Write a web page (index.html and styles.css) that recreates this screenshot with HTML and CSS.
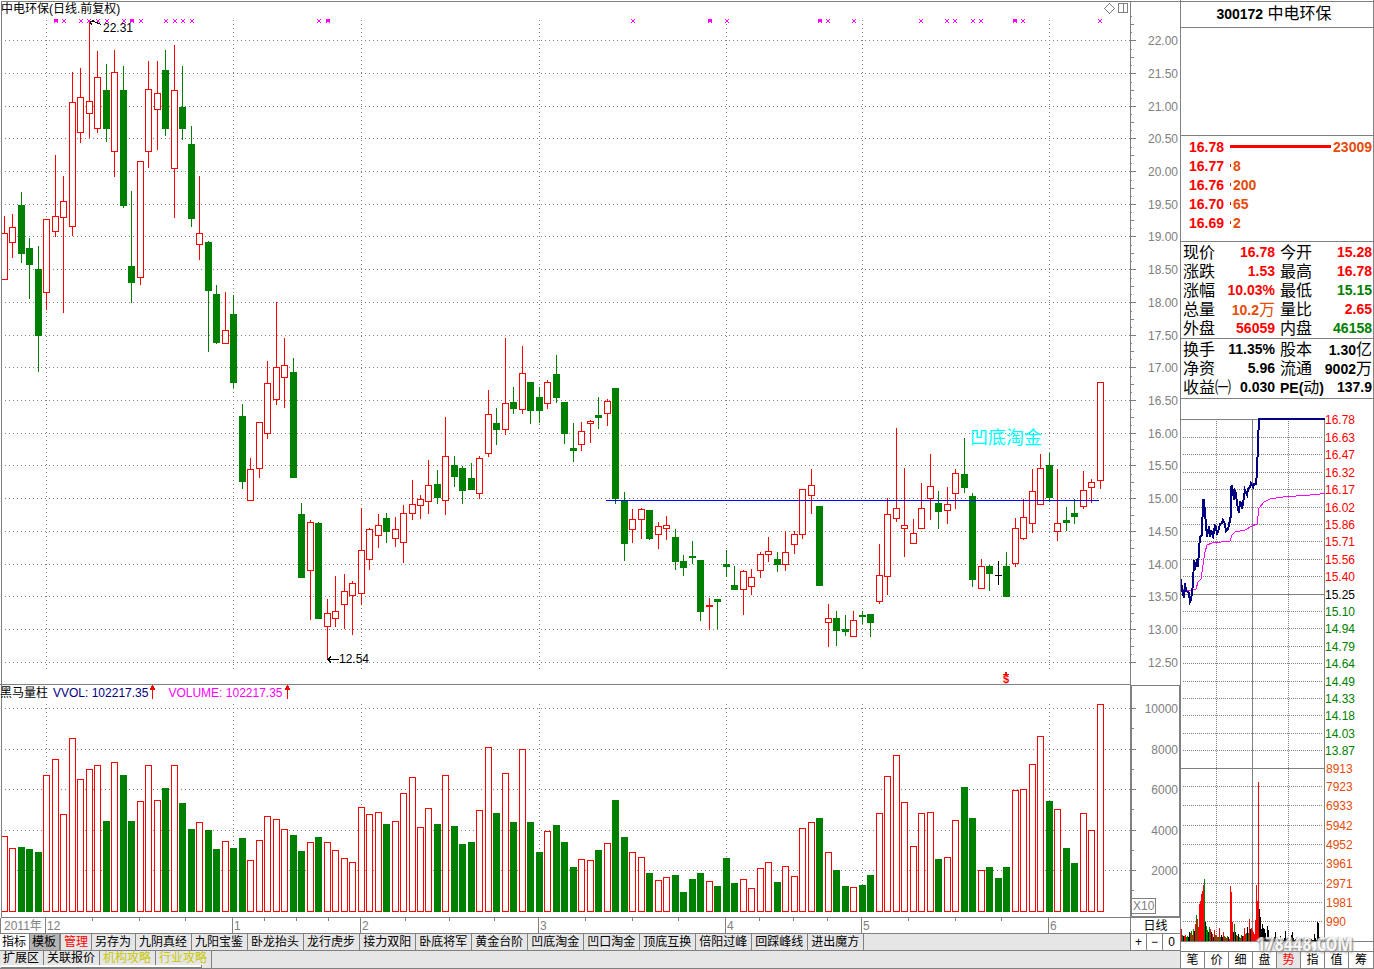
FILE: index.html
```html
<!DOCTYPE html>
<html lang="zh-CN">
<head>
<meta charset="utf-8">
<meta name="viewport" content="width=device-width, initial-scale=1">
<title>300172 中电环保</title>
<link rel="stylesheet" href="styles.css">
</head>
<body>
<div class="app">
  <main class="main">
    <figure class="chart">
      <figcaption class="chart__title">中电环保(日线.前复权)</figcaption>
      <svg id="price" class="plot" viewBox="0 0 1180 684" role="img" aria-label="日线"></svg>
    </figure>
    <figure class="chart">
      <figcaption class="chart__title chart__title--volume">
        <span>黑马量柱</span>
        <span class="vvol">VVOL: 102217.35<svg class="up" viewBox="0 0 7 14"><path d="M3 0h1v14h-1zM2 1h3v2h1v2h-5v-2h1z"/></svg></span>
        <span class="volume">VOLUME: 102217.35<svg class="up" viewBox="0 0 7 14"><path d="M3 0h1v14h-1zM2 1h3v2h1v2h-5v-2h1z"/></svg></span>
      </figcaption>
      <svg id="volume" class="plot" viewBox="0 684 1180 234" role="img" aria-label="成交量"></svg>
    </figure>
    <div class="timeline">
      <svg id="timeline" class="plot" viewBox="0 918 1130 15" role="img" aria-label="时间轴"></svg>
      <button class="timeline__period" type="button">日线</button>
    </div>
    <div class="bar">
      <nav class="tabs">
        <button class="tab tab--short tab--active" type="button">指标</button>
        <button class="tab tab--short tab--pressed" type="button">模板</button>
        <button class="tab tab--manage" type="button">管理</button>
        <button class="tab" type="button">另存为</button>
        <button class="tab" type="button">九阴真经</button>
        <button class="tab" type="button">九阳宝鉴</button>
        <button class="tab" type="button">卧龙抬头</button>
        <button class="tab" type="button">龙行虎步</button>
        <button class="tab" type="button">接力双阳</button>
        <button class="tab" type="button">卧底将军</button>
        <button class="tab" type="button">黄金台阶</button>
        <button class="tab" type="button">凹底淘金</button>
        <button class="tab" type="button">凹口淘金</button>
        <button class="tab" type="button">顶底互换</button>
        <button class="tab" type="button">倍阳过峰</button>
        <button class="tab" type="button">回踩峰线</button>
        <button class="tab" type="button">进出魔方</button>
      </nav>
      <div class="zoomer">
        <button class="zoomer__btn" type="button">+</button>
        <button class="zoomer__btn" type="button">−</button>
        <button class="zoomer__btn" type="button">0</button>
      </div>
    </div>
    <div class="bar bar--extra">
      <nav class="tabs">
        <button class="tab" type="button">扩展区</button>
        <button class="tab" type="button">关联报价</button>
        <button class="tab tab--gold" type="button">机构攻略</button>
        <button class="tab tab--gold" type="button">行业攻略</button>
      </nav>
    </div>
  </main>

  <aside class="side">
    <h1 class="side__title"><b>300172</b> 中电环保</h1>
    <div class="side__blank"></div>
    <ul class="queue">
      <li class="queue__row"><b>16.78</b><i class="queue__bar queue__bar--full"></i><b class="orange">23009</b></li>
      <li class="queue__row"><b>16.77</b><i class="queue__bar"></i><b class="orange">8</b></li>
      <li class="queue__row"><b>16.76</b><i class="queue__bar"></i><b class="orange">200</b></li>
      <li class="queue__row"><b>16.70</b><i class="queue__bar"></i><b class="orange">65</b></li>
      <li class="queue__row"><b>16.69</b><i class="queue__bar"></i><b class="orange">2</b></li>
    </ul>
    <dl class="stats">
      <dt>现价</dt><dd class="red">16.78</dd><dt>今开</dt><dd class="red">15.28</dd>
      <dt>涨跌</dt><dd class="red">1.53</dd><dt>最高</dt><dd class="red">16.78</dd>
      <dt>涨幅</dt><dd class="red">10.03%</dd><dt>最低</dt><dd class="green">15.15</dd>
      <dt>总量</dt><dd class="orange">10.2<span class="unit">万</span></dd><dt>量比</dt><dd class="red">2.65</dd>
      <dt>外盘</dt><dd class="red">56059</dd><dt>内盘</dt><dd class="green">46158</dd>
    </dl>
    <dl class="stats stats--base">
      <dt>换手</dt><dd>11.35%</dd><dt>股本</dt><dd>1.30<span class="unit">亿</span></dd>
      <dt>净资</dt><dd>5.96</dd><dt>流通</dt><dd>9002<span class="unit">万</span></dd>
      <dt>收益㈠</dt><dd>0.030</dd><dt><b>PE(</b>动<b>)</b></dt><dd>137.9</dd>
    </dl>
    <svg id="intraday" class="plot" viewBox="1181 399 192 552" role="img" aria-label="分时走势"></svg>
    <nav class="modes">
      <button class="mode" type="button">笔</button>
      <button class="mode" type="button">价</button>
      <button class="mode" type="button">细</button>
      <button class="mode" type="button">盘</button>
      <button class="mode mode--active" type="button">势</button>
      <button class="mode" type="button">指</button>
      <button class="mode" type="button">值</button>
      <button class="mode" type="button">筹</button>
    </nav>
    <span class="watermark">178448.COM</span>
  </aside>
</div>
<script src="chart.js"></script>
</body>
</html>
```

FILE: styles.css
```css
* {
  box-sizing: border-box;
}

body {
  margin: 0;
  background: #fff;
  color: #000;
  font: 12px/16px "Liberation Sans", "Noto Sans CJK SC", sans-serif;
}

button {
  margin: 0;
  padding: 0;
  border: 0;
  background: none;
  color: inherit;
  font: inherit;
  white-space: nowrap;
}

.app {
  display: grid;
  grid-template-columns: minmax(0, 1fr) 194px;
}

.main {
  display: flex;
  flex-direction: column;
  min-width: 0;
}

.plot {
  display: block;
  width: 100%;
  height: auto;
  shape-rendering: crispEdges;
}

.plot text {
  font-family: "Liberation Sans", "Noto Sans CJK SC", sans-serif;
  font-size: 12px;
}

/* charts */
.chart {
  position: relative;
  margin: 0;
}

.chart__title {
  position: absolute;
  top: 1px;
  left: 1px;
}

.chart__title--volume {
  display: flex;
  gap: 5px;
  left: 0;
}

.vvol {
  margin-right: 7px;
  color: #000080;
}

.volume {
  color: #f0f;
}

.up {
  width: 7px;
  height: 14px;
  margin-left: 1px;
  fill: #f00;
  vertical-align: top;
  shape-rendering: crispEdges;
}

.axis { fill: #808080; }
.grid { fill: none; stroke: #808080; stroke-dasharray: 1 3; }
.grid--fine { stroke-dasharray: 1 1; }
.rise { fill: #fff; stroke: #f00; }
.rise-fill { fill: #f00; }
.fall { fill: #008000; }
.flat { fill: #000; }
.level { fill: #00f; }
.mark { fill: #f0f; }
.tool { fill: none; stroke: #808080; }
.arrow { fill: none; stroke: #000; }
.axis-box { fill: #fff; stroke: #808080; }
.amount { fill: #e64b0a; }
.trend { fill: none; stroke: #000080; stroke-width: 2; }
.average { fill: none; stroke: #f0f; }

.plot .signal {
  fill: #0ff;
  font-size: 18px;
}

.plot .sell {
  fill: #f00;
  font-size: 11px;
  font-weight: bold;
}

/* time axis */
.timeline {
  display: grid;
  grid-template-columns: minmax(0, 1fr) 50px;
  border-bottom: 1px solid #808080;
}

.timeline__period {
  border-left: 1px solid #808080;
  line-height: 14px;
}

/* indicator tabs */
.bar {
  display: flex;
  justify-content: space-between;
  height: 17px;
  border-bottom: 1px solid #808080;
  background: #e6e6e6;
}

.bar--extra {
  position: relative;
  height: 18px;
}

.bar--extra::after {
  content: "";
  position: absolute;
  bottom: 0;
  left: 1px;
  width: 200px;
  height: 2px;
  border: solid #808080;
  border-width: 0 1px 1px 0;
  background: #fff;
}

.tabs {
  display: flex;
}

.tab {
  padding: 0 4px 0 3px;
  border-right: 1px solid #808080;
  line-height: 16px;
}

.bar--extra .tab {
  padding-bottom: 3px;
  line-height: 14px;
}

.tab--short {
  padding: 0 3px 0 2px;
}

.tab--active {
  background: #fff;
}

.tab--pressed {
  border-right-width: 2px;
  background: #b4b4b4;
}

.tab--manage {
  padding: 0 3px;
  color: #f00;
}

.tab--gold {
  color: #c8c800;
}

.zoomer {
  display: grid;
  grid-template-columns: repeat(2, 16px) 18px;
  background: #fff;
}

.zoomer__btn {
  border-left: 1px solid #808080;
}

/* quote panel */
.side {
  position: relative;
  display: flex;
  flex-direction: column;
  padding-top: 1px;
  border: solid #808080;
  border-width: 0 1px;
  font-size: 16px;
}

.side b,
.stats dd {
  font-size: 14px;
  font-weight: bold;
}

.side__title {
  height: 27px;
  margin: 0;
  padding-right: 6px;
  border: solid #808080;
  border-width: 1px 0;
  font-size: 16px;
  font-weight: normal;
  line-height: 24px;
  text-align: center;
}

.side__blank {
  height: 108px;
  border-bottom: 1px solid #808080;
}

.queue {
  margin: 0;
  padding: 1px 1px 9px 8px;
  border-bottom: 1px solid #808080;
  list-style: none;
  color: #f00;
}

.queue__row {
  display: flex;
  align-items: center;
  height: 19px;
}

.queue__bar {
  width: 1px;
  height: 3px;
  margin: 0 2px 0 6px;
  background: #f00;
}

.queue__bar--full {
  flex: 1;
}

.stats {
  display: grid;
  grid-template-columns: 32px minmax(0, 1fr) 32px 60px;
  grid-auto-rows: 19px;
  margin: 0;
  padding: 1px 1px 0 2px;
  border-bottom: 1px solid #808080;
  line-height: 19px;
  white-space: nowrap;
}

.stats--base {
  padding-bottom: 1px;
}

.stats dd {
  margin: 0;
  text-align: right;
}

.stats dd:nth-of-type(odd) {
  margin-right: 5px;
}

.unit {
  font-size: 16px;
  font-weight: normal;
}

.red { color: #f00; }
.green { color: #008000; }
.orange { color: #e64b0a; }

.modes {
  display: grid;
  grid-template-columns: repeat(8, 1fr);
  height: 18px;
  border: solid #808080;
  border-width: 1px 0;
}

.mode {
  border-right: 1px solid #808080;
  font-size: 12px;
  line-height: 16px;
}

.mode:last-child {
  border-right: 0;
}

.mode--active {
  background: #e6e6e6;
  color: #f00;
}

.watermark {
  position: absolute;
  right: 20px;
  bottom: 17px;
  color: #f4f4f4;
  font: bold 20px/16px "Liberation Sans Narrow", "Open Sans Condensed", "Liberation Sans", sans-serif;
  text-shadow: 1px 1px 1px #808080, -1px 0 1px #a0a0a0, 1px 2px 3px #a0a0a0;
  opacity: 0.85;
  pointer-events: none;
}
```

FILE: chart.js
```js
// One entry per session: kind, high, body top, body bottom, low, volume top.
const sessions = `
r 216 233 280 280 836|r 214 227 243 258 848|g 192 205 254 263 847|g 238 248 265 299 849|g 246 269 336 372 852
r 219 219 293 310 775|r 155 216 232 237 759|r 176 201 218 313 814|r 72 102 227 236 738|r 68 97 133 143 779
r 22 101 114 138 769|r 51 77 129 133 765|g 64 90 129 142 821|r 50 72 152 177 762|g 66 90 206 208 775
g 191 266 283 303 821|r 161 161 278 285 801|r 61 89 152 168 765|r 61 93 110 150 800|g 50 70 129 136 788
r 45 90 169 218 765|g 66 107 129 140 803|g 126 144 219 227 829|r 176 233 245 260 822|g 241 242 291 352 830
g 285 294 343 344 849|r 292 330 344 344 841|g 295 314 383 388 848|g 404 416 482 489 838|r 458 469 501 501 860
r 422 422 469 478 840|r 361 383 434 439 816|r 302 367 400 405 819|r 338 365 378 408 829|g 358 372 478 478 835
g 503 514 578 578 851|r 520 522 571 620 842|g 522 523 619 619 837|r 599 613 627 660 842|r 576 611 619 627 850
r 574 591 605 629 858|r 581 583 596 635 862|r 508 550 594 605 807|r 528 529 560 570 814|r 514 525 536 548 812
g 513 518 532 543 824|r 517 529 539 547 821|r 505 513 543 563 793|r 480 504 514 520 777|r 495 499 506 519 827
r 460 485 502 514 808|g 470 484 498 504 824|r 417 456 501 515 775|g 456 465 477 487 826|g 466 468 491 504 844
g 463 478 490 490 842|r 456 458 494 499 810|r 390 414 454 457 747|g 408 423 430 445 813|r 338 403 430 435 773
g 387 402 409 414 822|r 346 373 410 414 749|g 382 382 411 424 822|g 387 397 411 423 852|r 380 382 404 409 831
g 355 374 398 403 825|g 402 402 434 444 842|g 423 448 451 462 867|r 422 431 445 451 859|r 420 421 424 443 860
g 397 415 418 429 850|r 399 401 414 426 843|g 388 388 499 504 800|g 492 501 544 561 837|r 509 519 530 543 852
r 508 509 520 539 857|g 510 510 539 540 873|r 522 526 535 549 880|r 516 525 529 540 877|g 529 537 562 570 875
g 555 561 568 576 892|g 541 556 558 564 879|g 560 560 612 621 873|r 598 605 607 630 881|g 599 599 602 629 886
g 550 564 567 577 858|g 566 585 590 590 883|r 570 571 590 615 879|r 569 577 587 595 888|r 552 554 571 578 868
r 537 551 555 562 862|g 552 559 565 572 882|r 531 552 565 571 866|r 531 534 545 554 876|r 489 489 535 539 828
r 469 485 496 514 822|g 506 506 586 586 818|r 604 618 623 647 852|g 611 618 631 646 870|g 615 629 632 636 886
r 611 620 637 637 887|g 611 615 617 624 885|g 614 614 623 637 875|r 544 575 602 604 813|r 498 514 577 595 776
r 428 508 519 522 755|r 468 525 529 557 802|r 519 533 544 544 846|r 483 508 529 529 813|r 454 486 499 520 812
g 491 503 512 529 859|r 487 504 511 524 857|r 469 473 494 509 820|g 438 474 488 493 787|g 493 496 580 587 818
r 559 566 589 589 870|g 565 566 574 591 867|k 561 575 576 585 878|g 552 566 597 597 867|r 518 528 564 567 790
r 499 517 539 540 789|r 469 491 524 533 764|r 454 468 505 505 736|g 453 465 498 502 801|r 469 523 532 541 809
g 507 520 523 531 848|g 499 513 517 524 863|r 471 490 507 509 813|r 479 482 488 503 830|r 382 382 481 489 704
`.trim().split(/[|\n]/).map((row) => {
  const [kind, ...values] = row.split(" ");
  return [kind, ...values.map(Number)];
});

const barCenter = (i) => Math.floor((i < 50 ? 4 : 3.5) + 8.5 * i);
const months = [46, 233, 361, 539, 726, 862, 1049];

const rect = (cls, x, y, w, h) => `<rect class="${cls}" x="${x}" y="${y}" width="${w}" height="${h}"/>`;
const hollow = (x, y, w, h) => rect("rise", x + 0.5, y + 0.5, w - 1, h - 1);
const path = (cls, d) => `<path class="${cls}" d="${d}"/>`;
const text = (cls, x, y, value, anchor = "start") =>
  `<text class="${cls}" x="${x}" y="${y}" text-anchor="${anchor}">${value}</text>`;
const draw = (id, parts) => { document.getElementById(id).innerHTML = parts.join(""); };

function drawPrice() {
  const out = [];
  const rows = [40, 73, 106, 138, 171, 204, 236, 269, 302, 335, 367, 400, 433, 465, 498, 531, 564, 596, 629, 662];
  rows.forEach((y) => out.push(path("grid", `M5 ${y + 0.5}H1130`)));
  months.forEach((x) => out.push(path("grid", `M${x + 0.5} 20V669`)));
  out.push(rect("axis", 1, 1, 1179, 1), rect("axis", 1130, 1, 1, 683));

  rows.forEach((y, i) => {
    out.push(rect("axis", 1131, y, 5, 1), rect("axis", 1131, y - 8, 1, 1));
    out.push(rect("axis", 1131, y - 16, 3, 1), rect("axis", 1131, y - 24, 1, 1));
    out.push(text("axis", 1178, y + 5, (22 - i * 0.5).toFixed(2), "end"));
  });

  sessions.forEach(([kind, high, top, bottom, low], i) => {
    const c = barCenter(i);
    const wick = { r: "rise-fill", g: "fall", k: "flat" }[kind];
    out.push(rect(wick, c, high, 1, low - high));
    out.push(kind === "r" ? hollow(c - 3, top, 7, bottom - top) : rect(wick, c - 3, top, 7, bottom - top));
  });
  out.push(rect("axis", 1, 1, 1, 683));
  out.push(rect("level", 606, 500, 493, 1));

  const strong = [56, 132, 328, 710, 820, 1015];
  const events = [56, 64, 81, 89, 98, 107, 124, 132, 141, 166, 175, 183, 192, 319, 328, 633, 710, 727,
    820, 828, 854, 921, 947, 955, 973, 981, 1015, 1023, 1100];
  events.forEach((x) => {
    out.push(path("mark", `M${x - 2} 19h1v1h2v-1h1v1h-1v2h1v1h-1v-1h-2v1h-1v-1h1v-2h-1z`));
    if (strong.includes(x)) out.push(rect("mark", x - 2, 19, 4, 3));
  });

  out.push(path("arrow", "M90 21.5h4l7 3M94 20l-4 2l2 3"), text("flat", 103, 32, "22.31"));
  out.push(path("arrow", "M328 659.5h11M331 656.5l-3 3l3 3"), text("flat", 339, 663, "12.54"));
  out.push(text("signal", 970, 444, "凹底淘金"));
  out.push(text("sell", 1006, 683, "$", "middle"), path("rise-fill", "M1003 675h6v-1h-2v-2h-2v2h-2z"));
  out.push(path("tool", "M1109.5 3.5l5 5l-5 5l-5-5zM1118.5 3.5h9v9h-9zM1123.5 3.5v9"));
  draw("price", out);
}

function drawVolume() {
  const out = [];
  const rows = [[708, 10000], [749, 8000], [789, 6000], [830, 4000], [870, 2000]];
  rows.forEach(([y]) => out.push(path("grid", `M5 ${y + 0.5}H1130`)));
  months.forEach((x) => out.push(path("grid", `M${x + 0.5} 704V912`)));
  sessions.forEach(([kind, , , , , top], i) => {
    const x = barCenter(i) - 3;
    out.push(kind === "r" ? hollow(x, top, 7, 912 - top) : rect("fall", x, top, 7, 912 - top));
  });
  out.push(rect("axis", 0, 684, 1131, 1), rect("axis", 1, 684, 1, 233), rect("axis", 1, 917, 1179, 1));
  out.push(rect("axis", 1130, 685, 50, 1), rect("axis", 1130, 685, 2, 232));
  out.push(rect("axis", 1179, 685, 1, 232), rect("axis", 1130, 916, 50, 1));
  rows.forEach(([y, value]) => {
    out.push(rect("axis", 1132, y, 4, 1), rect("axis", 1132, y + 20, 2, 1));
    out.push(text("axis", 1178, y + 5, value, "end"));
  });
  out.push(rect("axis-box", 1131.5, 898.5, 24, 15), text("axis", 1133, 910, "X10"));
  draw("volume", out);
}

function drawTimeline() {
  const out = [];
  months.forEach((x, i) => {
    out.push(rect("axis", x - 1, 918, 1, 15), text("axis", x + 1, 930, i ? i : 12));
  });
  [92, 139, 185, 264, 296, 328, 405, 449, 494, 585, 632, 678, 759, 793, 827, 908, 955, 1001]
    .forEach((x) => out.push(rect("axis", x, 918, 1, 3)));
  out.push(text("axis", 4, 930, "2011年"), rect("axis", 0, 918, 1, 15));
  draw("timeline", out);
}

function drawIntraday() {
  const out = [];
  const prices = [[419, 16.78], [437, 16.63], [454, 16.47], [472, 16.32], [489, 16.17], [507, 16.02], [524, 15.86],
    [541, 15.71], [559, 15.56], [576, 15.40], [594, 15.25], [611, 15.10], [628, 14.94], [646, 14.79], [663, 14.64],
    [681, 14.49], [698, 14.33], [715, 14.18], [733, 14.03], [750, 13.87]];
  const amounts = [[768, 8913], [786, 7923], [805, 6933], [825, 5942], [844, 4952], [863, 3961], [883, 2971],
    [902, 1981], [921, 990]];
  const solid = [419, 594, 768];

  [...prices, ...amounts].forEach(([y]) => {
    out.push(solid.includes(y) ? rect("axis", 1181, y, 143, 1) : path("grid grid--fine", `M1183 ${y + 0.5}H1322`));
  });
  out.push(path("grid grid--fine", "M1216.5 421V941M1288.5 421V941"));
  out.push(rect("axis", 1252, 419, 1, 523), rect("axis", 1324, 419, 1, 523), rect("axis", 1181, 941, 192, 1));
  prices.forEach(([y, v]) => {
    const cls = v > 15.25 ? "rise-fill" : v < 15.25 ? "fall" : "flat";
    out.push(text(cls, 1325, y + 5, v.toFixed(2)));
  });
  amounts.forEach(([y, v]) => out.push(text("amount", 1326, y + 5, v)));

  const ticks = ("r12 g6 k5 r5 r6 g4 g5 k4 k9 r8 g10 r6 g12 k10 r17 g26 r22 r14 r37 r40 r47 r50 r56 g62 k19 g15 g11 k9 "
    + "g14 r12 k9 r7 k4 r11 g6 r6 g4 g4 r13 g4 k6 k4 r9 g5 r4 r3 g5 k4 r2 r55 r49 r19 k9 g17 k9 g6 r5 k7 g4 r3 g6 k5 "
    + "r5 r13 r7 g8 k14 g8 r22 k12 r13 r11 r9 r7 r21 r56 r40 r159 k32 k24 k12 k17 k13 k12 k8 k3 k15 k11 k4 k3 k4 k2 "
    + "k3 k4 k9 k2 k3 k2 k1 k5 k2 k2 k1 k3 k10 k2 k3 k4 k1 k2 k6 k9 k3 k1 k2 k1 k1 k2 k3 k1 k2 k1 k2 k3 k1 k1 k2 k1 "
    + "k3 k1 k2 k1 k1 k7 k3 k1 k19 k18 k4 k2").split(" ");
  const fill = { r: "rise-fill", g: "fall", k: "flat" };
  ticks.forEach((tick, i) => {
    const h = Number(tick.slice(1));
    out.push(rect(fill[tick[0]], 1181 + i, 941 - h, 1, h));
  });

  out.push(path("average", "M1181 587l2 2l3 1h7l3-1l2-7l3-3l2-14l2-13l2-7l5-2l18-2l2-6l3-3l10-2l7-4l5-2l2-16l5-6l6-3l13-2l27-2l10-1l5-1"));
  out.push(path("trend", "M1181 579l1 12l1 2l1 5l1-15l1 8l2 1l1 1l1 9l1-2l1-8l1-8l1-24l1 10l2-11l1 8l1-18l1-12l2-2l1-35l1 0l1 13l1 12"
    + "l1 12l2-11l1 11l1-7l2 6l2-10l1 1l1 8l2-7l1-4l2-1l1-3l2 4l1 7l2-2l1-4l2-10l0-27l1-3l2 15l1-9l1 2l1 11l2 9l1-12l2 6"
    + "l1-3l2-14l2 5l1-6l2-2l1-4l2 4l1-3h2l1-12l1-30l1-23h66"));
  draw("intraday", out);
}

drawPrice();
drawVolume();
drawTimeline();
drawIntraday();
```
